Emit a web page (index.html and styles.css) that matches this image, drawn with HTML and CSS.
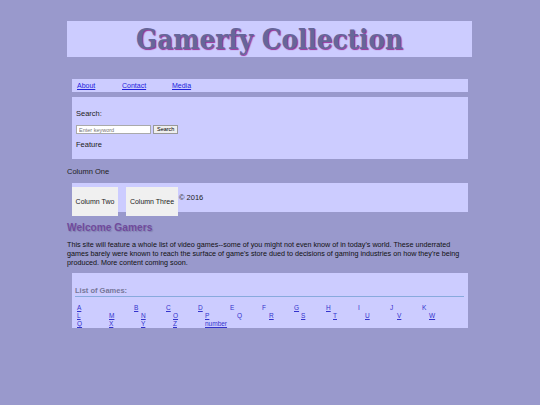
FILE: index.html
```html
<!DOCTYPE html>
<html>
<head>
<meta charset="utf-8">
<title>Gamerfy Collection</title>
<link rel="stylesheet" href="styles.css">
</head>
<body>
<div class="page">
  <header class="masthead"><h1 class="title">Gamerfy Collection</h1></header>
  <nav class="nav panel">
    <a href="#" class="nav-link">About</a>
    <a href="#" class="nav-link">Contact</a>
    <a href="#" class="nav-link">Media</a>
  </nav>
  <section class="search panel">
    <p class="label">Search:</p>
    <form class="search-form">
      <input class="search-input" type="text" placeholder="Enter keyword">
      <button class="search-btn" type="button">Search</button>
    </form>
    <p class="label feature">Feature</p>
  </section>
  <p class="col-one">Column One</p>
  <footer class="foot panel">
    <div class="col-box">Column Two</div>
    <div class="col-box col-three">Column Three</div>
    <span class="copy">© 2016</span>
  </footer>
  <h2 class="welcome">Welcome Gamers</h2>
  <p class="intro">This site will feature a whole list of video games--some of you might not even know of in today's world. These underrated games barely were known to reach the surface of game's store dued to decisions of gaming industries on how they're being produced. More content coming soon.</p>
  <section class="games panel">
    <h3 class="games-title">List of Games:</h3>
    <div class="row row1">
      <a href="#" class="first">A</a><a href="#">B</a><a href="#">C</a><a href="#">D</a><span>E</span><span>F</span><a href="#">G</a><a href="#">H</a><span>I</span><span>J</span><span>K</span>
    </div>
    <div class="row">
      <a href="#">L</a><a href="#">M</a><a href="#">N</a><a href="#">O</a><a href="#">P</a><span>Q</span><a href="#">R</a><a href="#">S</a><a href="#">T</a><a href="#">U</a><a href="#">V</a><a href="#">W</a>
    </div>
    <div class="row">
      <a href="#">Q</a><a href="#">X</a><a href="#">Y</a><a href="#">Z</a><a href="#">number</a>
    </div>
  </section>
</div>
</body>
</html>
```

FILE: styles.css
```css
html, body {
  margin: 0;
  padding: 0;
}
body {
  background: #9999cc;
  font-family: "Liberation Sans", Arial, sans-serif;
  color: #222;
  height: 405px;
}
.page {
  width: 405px;
  margin-left: 67px;
  padding-top: 21px;
}
.masthead {
  background: #ccccff;
  height: 36px;
  display: flex;
  align-items: center;
  justify-content: center;
}
.title {
  margin: 0;
  font-family: "DejaVu Serif Condensed", "DejaVu Serif", serif;
  font-stretch: condensed;
  font-weight: bold;
  font-size: 27.5px;
  color: #666699;
  text-shadow: 1px 1px 1px #993399;
}
.panel {
  background: #ccccff;
  margin-left: 5px;
  margin-right: 4px;
}
.nav {
  margin-top: 22px;
  height: 13px;
  display: flex;
  align-items: center;
  padding-left: 5px;
  font-size: 7px;
}
.nav-link {
  color: #2222dd;
  width: 45px;
}
.nav-link:nth-child(2) { width: 50px; }
.search {
  margin-top: 5px;
  height: 62px;
  padding: 0 4px;
  box-sizing: border-box;
  overflow: hidden;
}
.label {
  margin: 0;
  font-size: 7.5px;
  padding-top: 12px;
}
.search-form {
  margin-top: 7px;
  display: flex;
  gap: 2px;
}
.search-input {
  width: 75px;
  height: 9px;
  box-sizing: border-box;
  font-size: 5.5px;
  padding: 0 2px;
  border: 1px solid #aaa;
  background: #fff;
  font-family: "Liberation Sans", sans-serif;
}
.search-btn {
  height: 9px;
  box-sizing: border-box;
  font-size: 5.5px;
  padding: 0 3px;
  border: 1px solid #999;
  background: #eee;
  font-family: "Liberation Sans", sans-serif;
  line-height: 1;
}
.feature {
  padding-top: 6px;
}
.col-one {
  margin: 0;
  font-size: 7.5px;
  padding-top: 8px;
  height: 16px;
}
.foot {
  height: 29px;
  display: flex;
  align-items: flex-start;
}
.col-box {
  background: #f0f0f0;
  margin-top: 4px;
  height: 29px;
  width: 46px;
  display: flex;
  align-items: center;
  justify-content: center;
  font-size: 7px;
}
.col-three {
  margin-left: 8px;
  width: 52px;
}
.copy {
  font-size: 7.5px;
  margin-top: 10px;
  margin-left: 1px;
}
.welcome {
  margin: 0;
  padding-top: 10px;
  font-size: 10.2px;
  color: #704a9c;
  text-shadow: 1px 1px 1px #8080b0;
}
.intro {
  margin: 7px 0 0 0;
  font-size: 7.2px;
  line-height: 9px;
  color: #111;
}
.games {
  margin-top: 6px;
  height: 55px;
  padding: 13px 4px 0 3px;
  box-sizing: border-box;
}
.games-title {
  margin: 0;
  font-size: 7.5px;
  font-weight: bold;
  color: #777799;
  border-bottom: 1px solid #88aadd;
  padding-bottom: 1px;
  margin-bottom: 7px;
}
.row {
  display: flex;
  padding-left: 2px;
  height: 8px;
  font-size: 6.5px;
  line-height: 8px;
}
.row a, .row span {
  width: 32px;
  flex: none;
  color: #3333cc;
}
.row1 .first { width: 57px; }
.row a:last-child { width: auto; }
```
